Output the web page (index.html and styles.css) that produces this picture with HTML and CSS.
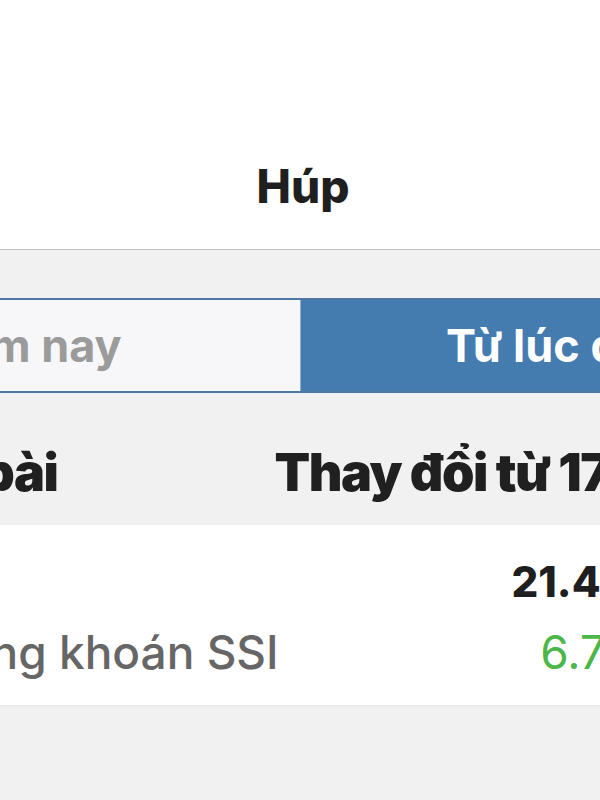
FILE: index.html
```html
<!DOCTYPE html>
<html lang="vi">
<head>
    <meta charset="UTF-8">
    <meta name="viewport" content="width=device-width, initial-scale=1.0">
    <title>Húp</title>
    <link rel="stylesheet" href="styles.css">
</head>
<body>
    <div class="screen">
        <div class="nav">
            <div class="nav-title">Húp</div>
        </div>

        <div class="tabs">
            <div class="segment">
                <div class="segment-item">Hôm nay</div>
                <div class="segment-item active">Từ lúc đầu</div>
            </div>
        </div>

        <div class="table-head">
            <div class="col-name">Tên bài</div>
            <div class="col-change">Thay đổi từ 17/3</div>
        </div>

        <div class="row">
            <div class="row-left">
                <div class="row-code">SSI</div>
                <div class="row-sub">Chứng khoán SSI</div>
            </div>
            <div class="row-right">
                <div class="row-price">21.450</div>
                <div class="row-pct up">6.74%</div>
            </div>
        </div>

        <div class="bottom"></div>
    </div>
</body>
</html>
```

FILE: styles.css
```css
html, body {
    margin: 0;
    padding: 0;
    width: 600px;
    height: 800px;
    overflow: hidden;
    background-color: #f1f1f1;
    font-family: Inter, "Noto Sans", sans-serif;
    color: #1f1f1f;
}
.screen {
    width: 1160px;
    margin-left: -280px;
}
.nav {
    height: 250px;
    box-sizing: border-box;
    padding-top: 159px;
    background-color: #fff;
    border-bottom: 1px solid #c4c4c4;
    display: flex;
    justify-content: center;
}
.nav-title {
    font-size: 46px;
    font-weight: 800;
    line-height: 54px;
    height: 54px;
    padding-left: 6px;
}
.tabs {
    padding: 48px 52px 0;
}
.segment {
    display: grid;
    grid-template-columns: 1fr 1fr;
    height: 95px;
    box-sizing: border-box;
    border: 2px solid #4e78a2;
    border-radius: 8px;
    overflow: hidden;
}
.segment-item {
    display: flex;
    align-items: center;
    justify-content: center;
    padding-right: 24px;
    font-size: 45px;
    font-weight: 700;
    line-height: 1;
    background-color: #f7f7f9;
    color: #9b9b9b;
}
.segment-item.active {
    padding-right: 8px;
    background-color: #457caf;
    color: #fff;
    border-left: 1px solid #8fb0cf;
}
.table-head {
    display: flex;
    justify-content: space-between;
    padding: 54px 192px 26px 160px;
    font-size: 52px;
    font-weight: 900;
    line-height: 1;
    letter-spacing: -1.5px;
    color: #202020;
}
.col-change {
    padding-right: 25px;
}
.row {
    display: flex;
    justify-content: space-between;
    padding: 36px 223px 30px 180px;
    background-color: #fff;
    border-bottom: 1px solid #e6e6e6;
}
.row-code, .row-price {
    font-size: 42px;
    font-weight: 800;
    line-height: 1;
    height: 42px;
    color: #1f1f1f;
}
.row-sub, .row-pct {
    margin-top: 26px;
    font-size: 46px;
    font-weight: 500;
    line-height: 1;
    color: #666;
}
.row-right {
    text-align: right;
}
.row-pct.up {
    margin-right: -21px;
    font-weight: 400;
    color: #4cb748;
}
.bottom {
    height: 120px;
}
```
